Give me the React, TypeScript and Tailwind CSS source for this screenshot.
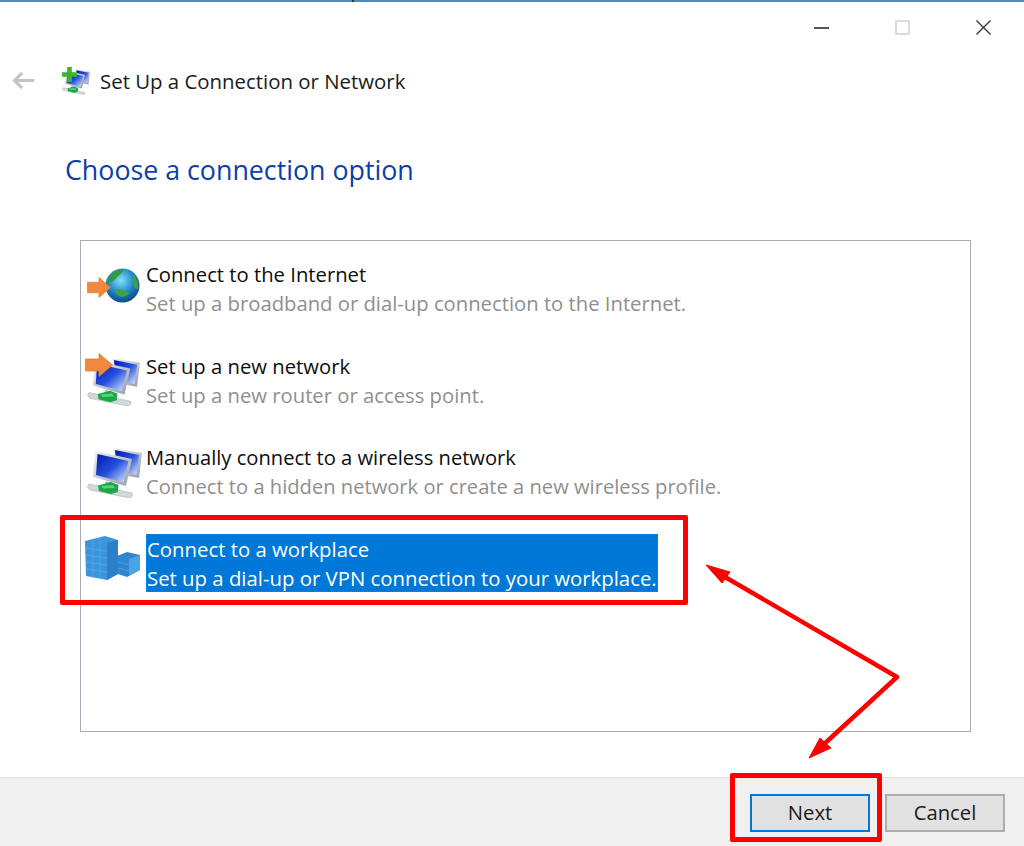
import React from "react";

const font = { fontFamily: '"Open Sans"' };

function Monitors({ className }: { className?: string }) {
  return (
    <svg viewBox="0 0 55 50" className={className}>
      <defs>
        <linearGradient id="scr" x1="0" y1="0" x2="1" y2="1">
          <stop offset="0" stopColor="#0716a8" />
          <stop offset="0.5" stopColor="#2450de" />
          <stop offset="1" stopColor="#e6edfc" />
        </linearGradient>
        <linearGradient id="bez" x1="0" y1="0" x2="1" y2="1">
          <stop offset="0" stopColor="#f2f4f7" />
          <stop offset="1" stopColor="#949cab" />
        </linearGradient>
      </defs>
      <path d="M26 0 L55 5 L52 30 L30 26 Z" fill="url(#bez)" />
      <path d="M28 2 L52 7 L49.5 27 L30 23 Z" fill="url(#scr)" />
      <path d="M8 3 L45 11 L39 38 L6 29 Z" fill="url(#bez)" />
      <path d="M10.5 6 L41.5 13 L36.5 34.5 L9 27 Z" fill="url(#scr)" />
      <path d="M19 33 L32 37 L31 42 L17 38 Z" fill="#b4bac4" />
      <path d="M2 36 L45 45 Q47 48 43 50 L3 42 Q-1 39 2 36 Z" fill="#d3d8da" stroke="#a9b0b2" strokeWidth="0.6" />
      <path d="M11 37.5 L24 34 L31 37 L31 44 L24 46 L12 43 Z" fill="#1aa748" />
      <path d="M14 38 L26 37 L28 40 L16 40.5 Z" fill="#55d27d" />
    </svg>
  );
}

function Arrow({ className }: { className?: string }) {
  return (
    <svg viewBox="0 0 28 24" className={className} preserveAspectRatio="none">
      <path d="M0.5 6 H14 V0.5 L27.5 12 L14 23.5 V18 H0.5 Z" fill="#f0883d" stroke="#dc7c38" strokeWidth="0.8" />
    </svg>
  );
}

function Globe({ className }: { className?: string }) {
  return (
    <svg viewBox="0 0 36 36" className={className}>
      <defs>
        <radialGradient id="gl" cx="0.45" cy="0.35" r="0.7">
          <stop offset="0" stopColor="#86e0f4" />
          <stop offset="0.55" stopColor="#1e86c8" />
          <stop offset="1" stopColor="#0b3c78" />
        </radialGradient>
      </defs>
      <circle cx="18" cy="18" r="17.5" fill="url(#gl)" />
      <path d="M5 8 Q12 0 20 2 Q15 7 12 10 Q8 14 3 16 Q3 11 5 8 Z" fill="#2f9a3f" />
      <path d="M29 6 Q35 13 34 22 Q30 22 29 16 Q28 11 29 6 Z" fill="#3ea23a" />
      <path d="M10 22 Q18 21 25 26 Q21 31 15 29 Q11 27 10 22 Z" fill="#3fa43c" />
    </svg>
  );
}

function Workplace({ className }: { className?: string }) {
  return (
    <svg viewBox="0 0 55 44" className={className}>
      <path d="M0 5 L20 0 L33 4 V38 L22 44 L1 40 Z" fill="#3b95dd" />
      <path d="M22 7 V44 L33 38 V4 Z" fill="#2d80c8" />
      <path d="M32 20 L42 16 L55 19 V34 L42 41 L33 38 Z" fill="#2f86cf" />
      <path d="M44 23 V40 L55 34 V19 Z" fill="#4aa3e3" />
      <g stroke="#66aee5" strokeWidth="0.6" fill="none">
        <path d="M1 12 L22 15 M1 19 L22 22 M1 26 L22 29 M1 33 L22 36 M8 4 V42 M15 2 V43 M33 26 L44 29 M33 32 L44 35" />
      </g>
    </svg>
  );
}

function Row({ icon, title, sub, size }: { icon: React.ReactNode; title: string; sub: string; size: string }) {
  return (
    <div className="flex h-[58px] items-start">
      <div className="relative h-[58px] w-[64px] shrink-0">{icon}</div>
      <div className={`flex flex-col pt-px leading-[29px] ${size}`}>
        <span className="text-[#0d0d0d]">{title}</span>
        <span className="text-[#8f8f8f]">{sub}</span>
      </div>
    </div>
  );
}

export default function App() {
  return (
    <div className="relative h-[846px] w-[1024px] overflow-hidden bg-white" style={font}>
      <div className="h-0.5 bg-[#4a8cc7]" />
      <div className="absolute left-[352px] top-0 h-[2px] w-[2px] bg-[#333333]" />
      {/* window controls */}
      <div className="flex h-[50px] items-start justify-end pr-[33px] pt-[18px]">
        <div className="mr-[66px] mt-[7px] h-0.5 w-[15px] bg-[#555555]" />
        <div className="mr-[66px] h-[15px] w-[15px] border-2 border-[#dcdcdc]" />
        <svg viewBox="0 0 16 16" className="h-[15px] w-[15px] text-[#333333]">
          <path d="M0.5 0.5 L15.5 15.5 M15.5 0.5 L0.5 15.5" stroke="currentColor" strokeWidth="1.4" fill="none" />
        </svg>
      </div>
      {/* header */}
      <div className="flex h-[58px] items-center pl-[11px]">
        <svg viewBox="0 0 24 18" className="-mt-[2px] h-[17px] w-[24px] text-[#c4c4c4]">
          <path d="M11 1 L3 9 L11 17 M3 9 H24" stroke="currentColor" strokeWidth="3.4" fill="none" />
        </svg>
        <div className="relative ml-[27px] h-[28px] w-[38px]">
          <Monitors className="absolute left-0 top-[2px] h-[26px] w-[28px]" />
          <svg viewBox="0 0 16 16" className="absolute left-0 top-0 h-[15px] w-[15px]">
            <path d="M5.5 0 H10.5 V5.5 H16 V10.5 H10.5 V16 H5.5 V10.5 H0 V5.5 H5.5 Z" fill="#3fb52f" />
          </svg>
        </div>
        <span className="text-[20.4px] text-[#1a1a1a]">Set Up a Connection or Network</span>
      </div>
      <h1 className="mt-[40px] pl-[65px] text-[26.77px] leading-[40px] text-[#0b3fa8]">Choose a connection option</h1>
      {/* list */}
      <div className="ml-[80px] mt-[50px] h-[492px] w-[891px] border border-[#a8adb4] pl-[1px] pt-[18px]">
        <Row
          size="text-[20.25px]"
          icon={
            <>
              <Globe className="absolute left-[23px] top-[9px] h-[35px] w-[35px]" />
              <Arrow className="absolute left-[5px] top-[18px] h-[21px] w-[24px]" />
            </>
          }
          title="Connect to the Internet"
          sub="Set up a broadband or dial-up connection to the Internet."
        />
        <div className="mt-[34px]">
          <Row
            size="text-[20.25px]"
            icon={
              <>
                <Monitors className="absolute left-[5px] top-[7px] h-[48px] w-[53px]" />
                <Arrow className="absolute left-[3px] top-[2px] h-[24px] w-[28px]" />
              </>
            }
            title="Set up a new network"
            sub="Set up a new router or access point."
          />
        </div>
        <div className="mt-[33px]">
          <Row
            size="text-[20.15px]"
            icon={<Monitors className="absolute left-[5px] top-[6px] h-[50px] w-[55px]" />}
            title="Manually connect to a wireless network"
            sub="Connect to a hidden network or create a new wireless profile."
          />
        </div>
        <div className="mt-[34px] flex h-[58px] items-start">
          <div className="relative h-[58px] w-[64px] shrink-0">
            <Workplace className="absolute left-[3px] top-[2px] h-[44px] w-[55px]" />
          </div>
          <div className="flex h-[58px] w-[512px] flex-col border border-dotted border-[#6e6e6e] bg-[#0078d7] text-[20.35px] leading-[29px] text-white">
            <span className="shrink-0">Connect to a workplace</span>
            <span className="shrink-0">Set up a dial-up or VPN connection to your workplace.</span>
          </div>
        </div>
      </div>
      {/* footer */}
      <div className="absolute bottom-0 left-0 right-0 flex h-[69px] items-start justify-end gap-[15px] border-t border-[#e3e3e3] bg-[#f0f0f0] pr-[19px] pt-[16px]">
        <button className="h-[38px] w-[120px] border-2 border-[#0078d7] bg-[#e1e1e1] pb-[2px] text-[20.25px] leading-[30px] text-[#1a1a1a]">Next</button>
        <button className="h-[38px] w-[120px] border-2 border-[#adadad] bg-[#e1e1e1] pb-[2px] text-[20.25px] leading-[30px] text-[#1a1a1a]">Cancel</button>
      </div>
      {/* annotations */}
      <div className="absolute left-[60px] top-[515px] h-[90px] w-[628px] rounded-[2px] border-[5px] border-[#ff0000]" />
      <div className="absolute left-[730px] top-[773px] h-[69px] w-[152px] rounded-[2px] border-[5px] border-[#ff0000]" />
      <svg className="absolute left-0 top-0 h-[846px] w-[1024px]" viewBox="0 0 1024 846">
        <path d="M897 677 L725 577 M897 677 L822 746" stroke="#ff0000" strokeWidth="4.5" fill="none" strokeLinecap="round" />
        <path d="M706 565 L730 572 L722 583 Z" fill="#ff0000" stroke="#ff0000" strokeWidth="1" />
        <path d="M809 758 L820 738 L831 748 Z" fill="#ff0000" stroke="#ff0000" strokeWidth="1" />
      </svg>
    </div>
  );
}
